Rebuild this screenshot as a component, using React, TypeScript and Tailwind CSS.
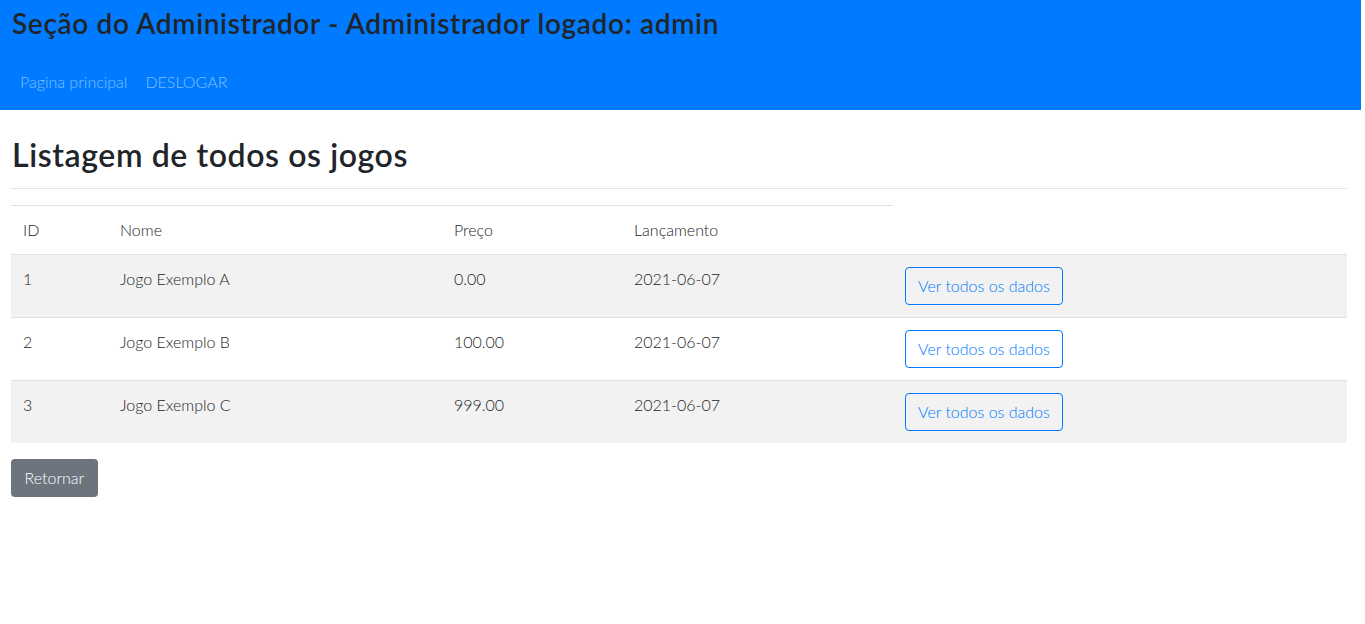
const jogos = [
  { id: 1, nome: 'Jogo Exemplo A', preco: '0.00', lancamento: '2021-06-07' },
  { id: 2, nome: 'Jogo Exemplo B', preco: '100.00', lancamento: '2021-06-07' },
  { id: 3, nome: 'Jogo Exemplo C', preco: '999.00', lancamento: '2021-06-07' },
];

export default function App() {
  return (
    <div className="min-h-screen bg-white">
      <div className="w-[1361px] text-[#212529] font-['Lato','Open_Sans',sans-serif] font-light">
        <header className="bg-[#007bff] h-[110px] px-3 pt-[6px]">
          <h3 className="text-[28px] leading-[34px] font-semibold tracking-[0.65px] text-[#212529]">
            Seção do Administrador - Administrador logado: admin
          </h3>
          <nav className="flex mt-[30px] px-2 text-[16px] leading-6 text-white/50">
            <a className="pr-[18px]">Pagina principal</a>
            <a>DESLOGAR</a>
          </nav>
        </header>

        <main className="pl-[11px] pr-[14px]">
          <h2 className="text-[32px] leading-[38px] font-semibold tracking-[0.6px] mt-[26px] pl-px">
            Listagem de todos os jogos
          </h2>
          <hr className="mt-[14px] border-t border-[#e5e5e5]" />

          <table className="w-full mt-4 border-collapse text-[16px] leading-6">
            <thead>
              <tr>
                <th className="w-[97px] text-left font-light px-3 py-3 border-t border-[#dee2e6]">ID</th>
                <th className="w-[334px] text-left font-light px-3 py-3 border-t border-[#dee2e6]">Nome</th>
                <th className="w-[180px] text-left font-light px-3 py-3 border-t border-[#dee2e6]">Preço</th>
                <th className="w-[271px] text-left font-light px-3 py-3 border-t border-[#dee2e6]">Lançamento</th>
              </tr>
            </thead>
            <tbody>
              {jogos.map((j, i) => (
                <tr key={j.id} className={i % 2 === 0 ? 'bg-[#f2f2f2]' : 'bg-white'}>
                  <td className="align-top px-3 py-3 border-t border-[#dee2e6]">{j.id}</td>
                  <td className="align-top px-3 py-3 border-t border-[#dee2e6]">{j.nome}</td>
                  <td className="align-top px-3 py-3 border-t border-[#dee2e6]">{j.preco}</td>
                  <td className="align-top px-3 py-3 border-t border-[#dee2e6]">{j.lancamento}</td>
                  <td className="align-top px-3 py-3 border-t border-[#dee2e6]">
                    <button className="h-[38px] px-3 border border-[#007bff] text-[#007bff] rounded-[4px] bg-transparent">
                      Ver todos os dados
                    </button>
                  </td>
                </tr>
              ))}
            </tbody>
          </table>

          <button className="mt-4 h-[38px] px-[13.5px] bg-[#6c757d] text-white rounded-[4px]">
            Retornar
          </button>
        </main>
      </div>
    </div>
  );
}
